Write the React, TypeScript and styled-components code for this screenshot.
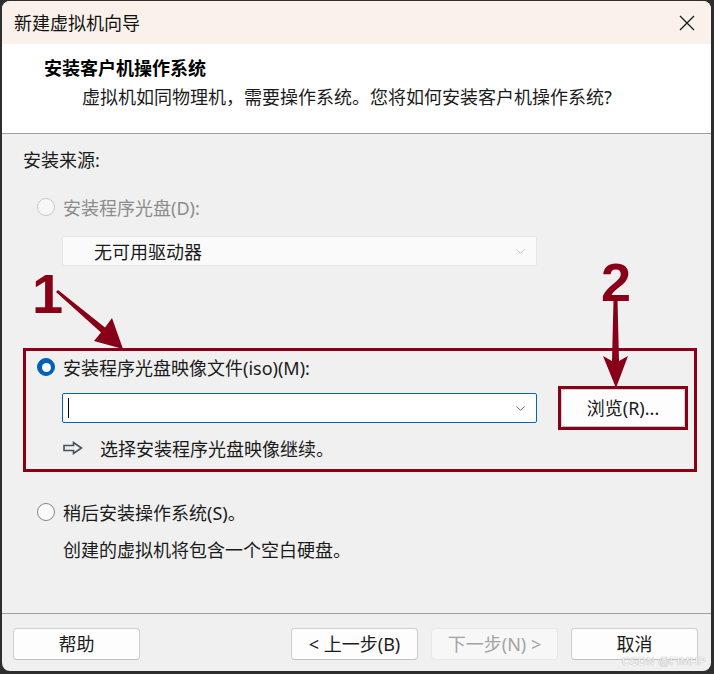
import React from 'react'
import styled, { createGlobalStyle } from 'styled-components'
import { ChevronDown } from 'lucide-react'

const GlobalStyle = createGlobalStyle`
  html, body {
    margin: 0;
    padding: 0;
    background: #2e2e2e;
  }
  body {
    font-family: "Noto Sans", "Noto Sans CJK SC", sans-serif;
    color: #1b1b1b;
  }
`

const Page = styled.div`
  position: relative;
  width: 714px;
  height: 674px;
  overflow: hidden;
`

const Window = styled.div`
  margin: 1px 0 0 2px;
  width: 709px;
  height: 670px;
  border-radius: 8px;
  overflow: hidden;
  background: #f0f0f0;
  display: flex;
  flex-direction: column;
`

const TitleBar = styled.div`
  height: 43px;
  flex: none;
  background: #f9f1ea;
  display: flex;
  align-items: center;
  justify-content: space-between;
  padding: 0 16px 0 12px;
  font-size: 18px;
  line-height: 24px;
  color: #111;
`

const CloseButton = styled.span`
  display: flex;
  width: 16px;
  height: 16px;
`

const Header = styled.div`
  flex: none;
  box-sizing: border-box;
  height: 90px;
  background: #fff;
  border-bottom: 1px solid #a0a0a0;
  padding: 12px 0 0 42px;
`

const HeaderTitle = styled.div`
  font-size: 18px;
  line-height: 24px;
  font-weight: 700;
  color: #000;
`

const HeaderSub = styled.div`
  margin: 5px 0 0 38px;
  font-size: 18px;
  line-height: 24px;
  color: #1b1b1b;
`

const Body = styled.div`
  flex: 1;
  display: flex;
  flex-direction: column;
  padding: 0 14px 0 21px;
`

const SectionLabel = styled.div`
  margin-top: 14px;
  font-size: 18px;
  line-height: 24px;
`

const OptionRow = styled.div<{ $top: number; $indent: number; $disabled?: boolean }>`
  display: flex;
  align-items: center;
  height: 22px;
  margin-top: ${p => p.$top}px;
  padding-left: ${p => p.$indent}px;
  font-size: 18px;
  color: ${p => (p.$disabled ? '#8c8c8c' : '#1b1b1b')};
`

const Radio = styled.span<{ $state: 'checked' | 'unchecked' | 'disabled' }>`
  flex: none;
  position: relative;
  box-sizing: border-box;
  width: 18px;
  height: 18px;
  margin-right: 8px;
  border-radius: 50%;
  background: ${p => (p.$state === 'checked' ? '#005fb8' : p.$state === 'disabled' ? '#f7f7f7' : '#fbfbfb')};
  border: 1px solid ${p => (p.$state === 'checked' ? '#005fb8' : p.$state === 'disabled' ? '#c9c9c9' : '#858585')};

  &::after {
    content: '';
    display: ${p => (p.$state === 'checked' ? 'block' : 'none')};
    position: absolute;
    left: 3.5px;
    top: 3.5px;
    width: 9px;
    height: 9px;
    border-radius: 50%;
    background: #fff;
  }
`

const Combo = styled.div<{ $disabled?: boolean }>`
  box-sizing: border-box;
  width: 475px;
  height: 30px;
  display: flex;
  align-items: center;
  justify-content: space-between;
  padding: 0 8px 0 ${p => (p.$disabled ? 31 : 5)}px;
  background: ${p => (p.$disabled ? '#fafafa' : '#fff')};
  border: 1px solid ${p => (p.$disabled ? '#e6e6e6' : '#0067c0')};
  border-radius: 2px;
  font-size: 18px;
  color: #1b1b1b;
  flex: none;
`

const DriveCombo = styled(Combo)`
  margin: 18px 0 0 39px;
`

const Caret = styled.span`
  width: 1px;
  height: 20px;
  background: #000;
`

const Highlight = styled.div`
  box-sizing: border-box;
  margin-top: 82px;
  height: 124px;
  border: 3px solid #870018;
  padding: 5px 0 0 11px;
  display: flex;
  flex-direction: column;
`

const HighlightRow = styled.div`
  display: flex;
  align-items: center;
  height: 44px;
  margin-top: 8px;
  padding-left: 25px;
`

const BrowseFrame = styled.div`
  box-sizing: border-box;
  margin-left: 21px;
  width: 130px;
  height: 44px;
  border: 3px solid #870018;
  display: flex;
`

const Button = styled.button<{ $disabled?: boolean }>`
  box-sizing: border-box;
  flex: none;
  width: 127px;
  height: 32px;
  padding: 0;
  border: 1px solid ${p => (p.$disabled ? '#e8e8e8' : '#d0d0d0')};
  border-bottom-color: ${p => (p.$disabled ? '#e8e8e8' : '#c0c0c0')};
  border-radius: 4px;
  background: ${p => (p.$disabled ? '#f7f7f7' : '#fdfdfd')};
  color: ${p => (p.$disabled ? '#a3a3a3' : '#1b1b1b')};
  font-family: inherit;
  font-size: 18px;
  line-height: 24px;
`

const BrowseButton = styled(Button)`
  width: 100%;
  height: 100%;
  border-radius: 3px;
`

const Hint = styled.div`
  display: flex;
  align-items: center;
  height: 22px;
  margin-top: 7px;
  padding-left: 26px;
  font-size: 18px;
  gap: 17px;
`

const Description = styled.div`
  margin-top: 16px;
  padding-left: 40px;
  font-size: 18px;
  line-height: 22px;
`

const Footer = styled.div`
  flex: none;
  box-sizing: border-box;
  height: 58px;
  border-top: 1px solid #a0a0a0;
  padding: 14px 13px 0 11px;
  display: flex;
  gap: 13px;
`

const Spacer = styled.div`
  flex: 1;
`

const Mark = styled.div<{ $left: number; $top: number; $size: number }>`
  position: absolute;
  left: ${p => p.$left}px;
  top: ${p => p.$top}px;
  font-family: "Liberation Sans", sans-serif;
  font-weight: 700;
  font-size: ${p => p.$size}px;
  line-height: 1;
  color: #870018;
`

const Arrows = styled.svg`
  position: absolute;
  left: 0;
  top: 0;
  pointer-events: none;
`

const Watermark = styled.div`
  position: absolute;
  left: 622px;
  top: 655px;
  font-family: "Liberation Sans", sans-serif;
  font-size: 11px;
  line-height: 13px;
  color: #fafafa;
  text-shadow: 0 0 1px #b0b0b0, 0 0 1px #b0b0b0;
  letter-spacing: 0.4px;
`

const CloseIcon = () => (
  <svg width="16" height="16" viewBox="0 0 16 16">
    <path d="M1 1 L15 15 M15 1 L1 15" stroke="#1a1a1a" strokeWidth="1.3" fill="none" />
  </svg>
)

const HintArrow = () => (
  <svg width="20" height="14" viewBox="0 0 20 14">
    <path d="M1 4.5 H10.5 V1.5 L18.5 7 L10.5 12.5 V9.5 H1 Z" stroke="#46505b" strokeWidth="1.6" fill="none" strokeLinejoin="miter" />
  </svg>
)

const App: React.FC = () => {
  return (
    <Page>
      <GlobalStyle />
      <Window>
        <TitleBar>
          <span>新建虚拟机向导</span>
          <CloseButton><CloseIcon /></CloseButton>
        </TitleBar>
        <Header>
          <HeaderTitle>安装客户机操作系统</HeaderTitle>
          <HeaderSub>虚拟机如同物理机，需要操作系统。您将如何安装客户机操作系统?</HeaderSub>
        </Header>
        <Body>
          <SectionLabel>安装来源:</SectionLabel>
          <OptionRow $top={24} $indent={14} $disabled>
            <Radio $state="disabled" />
            安装程序光盘(D):
          </OptionRow>
          <DriveCombo $disabled>
            <span>无可用驱动器</span>
            <ChevronDown size={15} strokeWidth={1.4} color="#bdbdbd" />
          </DriveCombo>
          <Highlight>
            <OptionRow $top={0} $indent={0}>
              <Radio $state="checked" />
              安装程序光盘映像文件(iso)(M):
            </OptionRow>
            <HighlightRow>
              <Combo>
                <Caret />
                <ChevronDown size={15} strokeWidth={1.4} color="#5f5f5f" />
              </Combo>
              <BrowseFrame>
                <BrowseButton>浏览(R)...</BrowseButton>
              </BrowseFrame>
            </HighlightRow>
            <Hint>
              <HintArrow />
              <span>选择安装程序光盘映像继续。</span>
            </Hint>
          </Highlight>
          <OptionRow $top={29} $indent={14}>
            <Radio $state="unchecked" />
            稍后安装操作系统(S)。
          </OptionRow>
          <Description>创建的虚拟机将包含一个空白硬盘。</Description>
        </Body>
        <Footer>
          <Button>帮助</Button>
          <Spacer />
          <Button>&lt; 上一步(B)</Button>
          <Button $disabled>下一步(N) &gt;</Button>
          <Button>取消</Button>
        </Footer>
      </Window>

      <Mark $left={32} $top={266} $size={56}>1</Mark>
      <Mark $left={601} $top={255} $size={54}>2</Mark>
      <Arrows width="714" height="674" viewBox="0 0 714 674">
        <polygon points="58,290 105,327.5 112,318 123,349 94,341 101,332.5 56,292" fill="#870018" />
        <polygon points="613.5,300 617.5,300 619,361 628,356 616,388 603,356 612,361" fill="#870018" />
      </Arrows>
      <Watermark>CSDN @FIMHP</Watermark>
    </Page>
  )
}

export default App
